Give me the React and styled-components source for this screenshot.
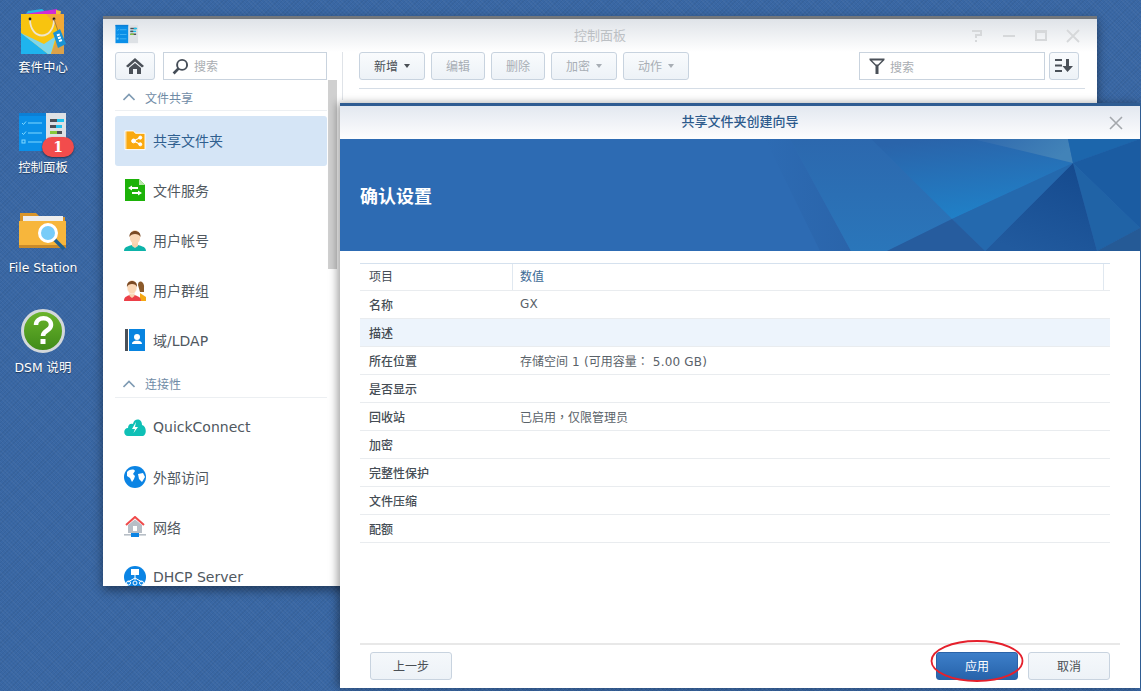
import React from "react";
import styled, { createGlobalStyle } from "styled-components";

const FONT = `"DejaVu Sans", "Noto Sans CJK SC", sans-serif`;

const Global = createGlobalStyle`
  html, body { margin: 0; padding: 0; height: 100%; overflow: hidden; }
  body { font-family: ${FONT}; }
  * { box-sizing: border-box; }
`;

const Desktop = styled.div`
  position: relative;
  width: 1141px;
  height: 691px;
  overflow: hidden;
  background-color: #3967a4;
  background-image: repeating-linear-gradient(45deg, rgba(255,255,255,.035) 0 1px, transparent 1px 3px),
    repeating-linear-gradient(-45deg, rgba(0,0,0,.05) 0 1px, transparent 1px 3px);
`;

const IconColumn = styled.div`
  display: flex;
  flex-direction: column;
  width: 86px;
  padding-top: 9px;
`;

const DesktopIcon = styled.div`
  display: flex;
  flex-direction: column;
  align-items: center;
  height: 100px;
  position: relative;
`;

const IconArt = styled.div`
  width: 50px;
  height: 50px;
  position: relative;
`;

const IconLabel = styled.div`
  margin-top: 2px;
  font-size: 12.4px;
  line-height: 14px;
  color: #fff;
  text-shadow: 0 1px 1px rgba(0, 0, 0, .45);
  white-space: nowrap;
`;

const Badge = styled.div`
  position: absolute;
  left: 24px;
  top: 28px;
  width: 32px;
  height: 20px;
  border-radius: 10px;
  background: #f24c4c;
  box-shadow: 0 1px 2px rgba(0, 0, 0, .5);
  color: #fff;
  font: bold 14px/20px "DejaVu Serif", serif;
  text-align: center;
`;

const Window = styled.div`
  position: absolute;
  left: 103px;
  top: 16px;
  width: 994px;
  height: 570px;
  background: #fff;
  border-top: 3px solid #73777c;
  box-shadow: 0 4px 10px rgba(0, 0, 0, .45);
  overflow: hidden;
`;

const WindowHeader = styled.div`
  height: 33px;
  position: relative;
  display: flex;
  align-items: center;
  justify-content: center;
  background: linear-gradient(#dfe3e8, #ffffff);
`;

const WindowTitle = styled.div`
  font-size: 13px;
  color: #bcc0c4;
  padding-bottom: 2px;
`;

const HeaderAppIcon = styled.div`
  position: absolute;
  left: 12px;
  top: 4px;
  width: 24px;
  height: 24px;
`;

const WindowControls = styled.div`
  position: absolute;
  right: 16px;
  top: 10px;
  display: flex;
  gap: 16px;
`;

const WindowBody = styled.div`
  display: flex;
  height: 534px;
`;

const Sidebar = styled.div`
  width: 239px;
  flex: none;
  position: relative;
  padding-left: 12px;
`;

const SidebarTop = styled.div`
  display: flex;
  gap: 8px;
  height: 28px;
`;

const IconButton = styled.div`
  width: ${p => p.$w || 40}px;
  height: 28px;
  flex: none;
  margin-right: ${p => p.$mr || 0}px;
  display: flex;
  align-items: center;
  justify-content: center;
  border: 1px solid #c8d3df;
  border-radius: 3px;
  background: linear-gradient(#f9fbfd, #edf2f7);
`;

const SearchBox = styled.div`
  width: ${p => p.$w}px;
  height: 28px;
  flex: none;
  margin-right: ${p => p.$mr || 0}px;
  display: flex;
  align-items: center;
  gap: ${p => p.$gap || 5}px;
  padding-left: ${p => p.$pad}px;
  border: 1px solid #c9d3de;
  background: #fff;
  font-size: 12px;
  color: #a9adb2;
`;

const SearchHint = styled.span`
  padding-bottom: ${p => p.$pb || 0}px;
`;

const Section = styled.div`
  width: 212px;
  height: ${p => p.$h || 31}px;
  display: flex;
  align-items: center;
  gap: 10px;
  padding: 4px 0 0 8px;
  border-bottom: 1px solid #eceff2;
  font-size: 12px;
  color: #6f8ba6;
`;

const NavRow = styled.div`
  width: 212px;
  height: 50px;
  margin-top: ${p => p.$mt || 0}px;
  display: flex;
  align-items: center;
  gap: 7px;
  padding: 0 0 3px 9px;
  border-radius: 3px;
  background: ${p => (p.$active ? "#d5e5f6" : "transparent")};
  color: ${p => (p.$active ? "#2f5f8f" : "#50585f")};
  font-size: 14px;
  white-space: nowrap;
`;

const NavIcon = styled.div`
  width: 22px;
  height: 22px;
  flex: none;
  display: flex;
  align-items: center;
  justify-content: center;
`;

const Scrollbar = styled.div`
  position: absolute;
  left: 225px;
  top: 28px;
  width: 9px;
  height: 189px;
  background: #d0d0d0;
`;

const Main = styled.div`
  flex: 1;
  padding: 0 12px 0 17px;
  position: relative;
  &::before {
    content: "";
    position: absolute;
    left: 0;
    top: 0;
    height: 48px;
    width: 1px;
    background: #dfe3e8;
  }
`;

const Toolbar = styled.div`
  display: flex;
  height: 37px;
  border-bottom: 1px solid #d5dde6;
  gap: 6px;
  width: 726px;
`;

const ToolButton = styled.div`
  width: ${p => p.$w}px;
  height: 28px;
  display: flex;
  align-items: center;
  justify-content: center;
  gap: 6px;
  border: 1px solid #c8d3df;
  border-radius: 3px;
  padding-bottom: 2px;
  background: linear-gradient(#f9fbfd, #edf2f7);
  font-size: 12px;
  color: ${p => (p.$disabled ? "#a8aeb5" : "#4a4f55")};
`;

const Caret = styled.span`
  width: 0;
  height: 0;
  margin-top: 2px;
  border: 3.5px solid transparent;
  border-top: 4px solid ${p => (p.$disabled ? "#a8aeb5" : "#4a4f55")};
  border-bottom: 0;
`;

const Spacer = styled.div`
  flex: 1;
`;

const Wizard = styled.div`
  position: absolute;
  left: 340px;
  top: 103px;
  width: 801px;
  height: 585px;
  background: #fff;
  border-top: 3px solid #2f5c92;
  border-right: 1px solid #2f5c92;
  box-shadow: -3px 0 8px rgba(0, 0, 0, .35);
  display: flex;
  flex-direction: column;
`;

const WizardHeader = styled.div`
  height: 33px;
  flex: none;
  position: relative;
  display: flex;
  align-items: center;
  justify-content: center;
  padding-bottom: 4px;
  background: linear-gradient(#e3e8f0, #fdfdfe);
  font-size: 13px;
  font-weight: 500;
  color: #2c5a8c;
`;

const CloseIcon = styled.div`
  position: absolute;
  right: 17px;
  top: 10px;
  width: 14px;
  height: 14px;
`;

const Banner = styled.div`
  height: 112px;
  flex: none;
  position: relative;
  background: #2d6bb3;
  display: flex;
  align-items: center;
  padding: 0 0 1px 20px;
  font-size: 18px;
  font-weight: bold;
  color: #fff;
  overflow: hidden;
`;

const BannerArt = styled.svg`
  position: absolute;
  left: 0;
  top: 0;
`;

const BannerTitle = styled.div`
  position: relative;
`;

const TableWrap = styled.div`
  flex: 1;
  padding: 12px 30px 0 20px;
`;

const Row = styled.div`
  display: grid;
  grid-template-columns: 152px 1fr ${p => (p.$head ? "7px" : "")};
  height: 28px;
  align-items: center;
  border-bottom: 1px solid #e9ecef;
  background: ${p => (p.$hl ? "#edf4fc" : "transparent")};
  font-size: 12px;
`;

const HeadRow = styled(Row)`
  border-top: 1px solid #d5e1ee;
  color: #3c6a95;
`;

const Cell = styled.div`
  height: 100%;
  display: flex;
  align-items: center;
  padding: 0 0 ${p => p.$pb ?? 1}px ${p => p.$pl || 9}px;
  white-space: pre;
  border-left: ${p => (p.$divider ? "1px solid #e0e8f0" : "0")};
`;

const KeyCell = styled(Cell)`
  color: #454d55;
  font-weight: ${p => (p.$head ? 400 : 500)};
`;

const ValueCell = styled(Cell)`
  color: #5a6269;
`;

const ValueText = styled.span`
  display: block;
`;

const Latin = styled.span`
  letter-spacing: .2px;
`;

const Punct = styled.span`
  font-family: "Noto Sans CJK TC", sans-serif;
`;

const Footer = styled.div`
  height: 45px;
  flex: none;
  margin: 0 20px;
  padding: 7px 10px 0;
  border-top: 2px solid #e8e8e8;
  display: flex;
  gap: 10px;
  background: #fff;
`;

const FooterButton = styled.div`
  width: 82px;
  height: 28px;
  display: flex;
  align-items: center;
  justify-content: center;
  padding-bottom: 2px;
  border-radius: 3px;
  font-size: 12px;
  border: 1px solid ${p => (p.$primary ? "#2a63a8" : "#c8d3df")};
  background: ${p => (p.$primary ? "linear-gradient(#3d7fc9, #2763ab)" : "linear-gradient(#f5f8fb, #edf2f7)")};
  color: ${p => (p.$primary ? "#fff" : "#4a4f55")};
`;

const Annotation = styled.svg`
  position: absolute;
  left: 928px;
  top: 638px;
  pointer-events: none;
`;

const Shop = () => (
  <svg width="50" height="50" viewBox="0 0 50 50">
    <path d="M10 2 L24 0 L30 5 H8z" fill="#25b9e4" />
    <path d="M7 5 L39 0 L40 5z" fill="#d02cd6" />
    <path d="M38 1 L43 2 L42 8 L38 8z" fill="#f4c23a" />
    <path d="M3 5 H46 V45 H3z" fill="#f8c40f" />
    <path d="M28 5 H46 V45 H34 L42 22z" fill="#f2a936" />
    <path d="M3 24 L30 45 H3z" fill="#1fb4ee" />
    <path d="M3 24 L26 35 L38 27 L33 45 H30z" fill="#7ed6ec" />
    <path d="M33 45 L41 24 L46 24 V45z" fill="#dca24a" />
    <path d="M12 10 C12 32 36 32 36 10" fill="none" stroke="#efe6cf" strokeWidth="1.8" />
    <circle cx="12" cy="10" r="1.4" fill="#222" /><circle cx="36" cy="10" r="1.4" fill="#222" />
    <path d="M36 10 L40 22" stroke="#a9803a" strokeWidth="1" />
    <path d="M35 24 L42 20 L48 35 L40 39z" fill="#1a93d4" />
    <path d="M40 25 l3 8" stroke="#fff" strokeWidth="3" strokeDasharray="2 1" />
  </svg>
);

const Panel = ({ size = 50 }) => (
  <svg width={size} height={size} viewBox="0 -4 50 50">
    <rect x="1" y="0" width="27" height="38" fill="#0a8fe8" />
    <rect x="1" y="0" width="27" height="3" fill="#0b7fd6" />
    <rect x="28" y="0" width="20" height="38" fill="#dde1e5" />
    <g stroke="#7fd8ff" strokeWidth="1">
      <path d="M10 10h14M10 20h14M10 29h14" />
      <path d="M4 10l1.5 1.5 2.5-3M4 20l1.5 1.5 2.5-3" fill="none" />
      <rect x="4" y="27" width="3" height="3" fill="none" />
    </g>
    <rect x="32" y="6" width="12" height="3" fill="#4a5058" /><rect x="39" y="6" width="7" height="3" fill="#1cc3ef" />
    <rect x="32" y="12" width="12" height="3" fill="#1cc3ef" /><rect x="32" y="12" width="6" height="3" fill="#4a5058" />
    <rect x="32" y="18" width="12" height="3" fill="#4a5058" /><rect x="32" y="18" width="7" height="3" fill="#86c83c" />
  </svg>
);

const Folder = () => (
  <svg width="50" height="50" viewBox="0 0 50 50">
    <path d="M2 4 H18 L22 8 H47 V36 H2z" fill="#d8952a" />
    <rect x="5" y="7" width="40" height="8" fill="#eeeeee" />
    <path d="M1 12 H48 V39 H1z" fill="#f7b63c" />
    <path d="M1 36 H48 V39 H1z" fill="#c98b2b" />
    <path d="M36 30 L46 40" stroke="#1f5f8f" strokeWidth="3.5" />
    <circle cx="30" cy="24" r="8.5" fill="#78ccf8" stroke="#fff" strokeWidth="3" />
  </svg>
);

const Help = () => (
  <svg width="50" height="50" viewBox="0 0 50 50">
    <defs><linearGradient id="hg" x1="0" y1="0" x2="0" y2="1"><stop offset="0" stopColor="#6bb52c" /><stop offset="1" stopColor="#3f8a18" /></linearGradient></defs>
    <circle cx="25" cy="22" r="20.5" fill="url(#hg)" stroke="#d3d8db" strokeWidth="3" />
    <path d="M18 16 C18 7 33 7 33 16 C33 22 25 21 25 27" fill="none" stroke="#fff" strokeWidth="4.5" />
    <rect x="22.5" y="30" width="5" height="5" fill="#fff" />
  </svg>
);

const Chevron = () => (
  <svg width="12" height="8" viewBox="0 0 12 8"><path d="M0.5 7 L6 1.5 L11.5 7" fill="none" stroke="#7f9bb3" strokeWidth="1.6" /></svg>
);

const Magnifier = () => (
  <svg width="17" height="17" viewBox="0 0 16 16"><circle cx="9.5" cy="6.5" r="4.7" fill="none" stroke="#454d57" strokeWidth="1.8" /><path d="M6 10 L1.5 14.5" stroke="#454d57" strokeWidth="2.6" /></svg>
);

const FolderNav = () => (
  <svg width="23" height="22" viewBox="0 0 23 22">
    <path d="M1 1.5 H10 L12 4 H22 V21 H1z" fill="#faa90f" stroke="#fff" strokeWidth="1" />
    <path d="M1 1.5 H3 V21 H1z" fill="#fff" opacity=".35" />
    <g fill="#fff" stroke="#fff"><circle cx="10" cy="12" r="2" /><circle cx="17" cy="8.5" r="1.6" /><circle cx="17" cy="15.5" r="1.6" /><path d="M10 12 L17 8.5 M10 12 L17 15.5" strokeWidth="1.2" /></g>
  </svg>
);

const FileService = () => (
  <svg width="20" height="22" viewBox="0 0 20 22">
    <path d="M0 0 H14 L20 6 V22 H0z" fill="#1cb208" />
    <path d="M14 0 V6 H20z" fill="#b8e8a8" />
    <path d="M3 9 L7 6.5 V8 H13 V10 H7 V11.5z M17 14 L13 11.5 V13 H7 V15 H13 V16.5z" fill="#fff" />
  </svg>
);

const User = () => (
  <svg width="22" height="22" viewBox="0 0 22 22">
    <path d="M0 22 C0 17 6 17 11 15 C16 17 22 17 22 22z" fill="#0db3a9" />
    <path d="M8 13 H14 V17 L11 19 L8 17z" fill="#f8d2ad" />
    <ellipse cx="11" cy="8" rx="5.2" ry="7" fill="#fbd7b5" />
    <path d="M5.5 8 C4.5 0 17.5 0 16.5 8 C15 4 7 4 5.5 8z" fill="#7b4a24" />
  </svg>
);

const Group = () => (
  <svg width="22" height="22" viewBox="0 0 22 22">
    <path d="M14 6 C14 0 21 2 20 9 L20 13 L16 13z" fill="#8b5a2b" />
    <path d="M16 14 L22 18 V22 H16z" fill="#f5a914" />
    <path d="M0 22 C0 17 4 17 8 15 C12 17 17 17 17 22z" fill="#ec3f47" />
    <path d="M5.5 13 H10.5 V17 L8 19 L5.5 17z" fill="#f8d2ad" />
    <ellipse cx="8" cy="8" rx="5" ry="7" fill="#fbd7b5" stroke="#fff" strokeWidth=".5" />
    <path d="M3 8 C2 0 14 0 13 8 C12 4 4 4 3 8z" fill="#7b4a24" />
  </svg>
);

const Ldap = () => (
  <svg width="20" height="22" viewBox="0 0 20 22">
    <rect x="0" y="0" width="3" height="22" fill="#4a5058" />
    <rect x="4" y="0" width="16" height="22" fill="#0884e0" />
    <circle cx="12" cy="8" r="3" fill="#fff" />
    <path d="M7 15 C7 12 10 12 12 11.5 C14 12 17 12 17 15z" fill="#fff" />
  </svg>
);

const Cloud = () => (
  <svg width="22" height="18" viewBox="0 0 22 18">
    <path d="M4 18 C-1 18 -1 10 4 10 C4 6 7 5 9 6 C10 0 18 0 18 7 C23 8 23 18 18 18z" fill="#0fc0b6" />
    <path d="M12 4 L8 11 H11 L9.5 15 L14 9 H11z" fill="#fff" />
  </svg>
);

const Globe = () => (
  <svg width="22" height="22" viewBox="0 0 22 22">
    <circle cx="11" cy="11" r="11" fill="#0b84e4" />
    <path d="M3 6 C6 3 10 3 11 5 L9 8 L11 10 L10 13 L8 16 L6 12 L3 10z M14 8 L19 7 L21 11 L18 16 L15 13z" fill="#fff" />
  </svg>
);

const House = () => (
  <svg width="22" height="22" viewBox="0 0 22 22">
    <path d="M2 9 L11 1 L20 9" fill="none" stroke="#f04a4a" strokeWidth="2" />
    <path d="M4 9 L11 3.5 L18 9 V17 H4z" fill="#b7bec6" />
    <rect x="9" y="10" width="4" height="5" fill="#fff" />
    <rect x="0" y="18" width="22" height="1.6" fill="#b7bec6" />
    <rect x="7" y="17" width="8" height="4" fill="#0b84e4" />
  </svg>
);

const Dhcp = () => (
  <svg width="22" height="22" viewBox="0 0 22 22">
    <circle cx="11" cy="11" r="11" fill="#0b84e4" />
    <path d="M7 3 H15 V9 H7z" fill="#fff" />
    <path d="M11 8 V14 M4 16 L11 12 L18 16" stroke="#fff" fill="none" />
    <g fill="none" stroke="#fff"><circle cx="4.5" cy="17" r="2" /><circle cx="11" cy="17" r="2" /><circle cx="17.5" cy="17" r="2" /></g>
  </svg>
);

const Controls = () => (
  <>
    <svg width="16" height="14" viewBox="0 0 16 14"><path d="M3 2 H12 V6 H7 V9 M7 11 V13" fill="none" stroke="#d6d8da" strokeWidth="2" /></svg>
    <svg width="16" height="14" viewBox="0 0 16 14"><path d="M2 7 H14" stroke="#d6d8da" strokeWidth="2" /></svg>
    <svg width="16" height="14" viewBox="0 0 16 14"><rect x="3" y="2" width="10" height="9" fill="none" stroke="#d6d8da" strokeWidth="2" /><path d="M3 3 H13" stroke="#d6d8da" strokeWidth="2" /></svg>
    <svg width="16" height="14" viewBox="0 0 16 14"><path d="M2 1 L14 13 M14 1 L2 13" stroke="#d6d8da" strokeWidth="1.8" /></svg>
  </>
);

const nav1 = [
  ["共享文件夹", <FolderNav />, true],
  ["文件服务", <FileService />],
  ["用户帐号", <User />],
  ["用户群组", <Group />],
  ["域/LDAP", <Ldap />],
];
const nav2 = [
  ["QuickConnect", <Cloud />],
  ["外部访问", <Globe />],
  ["网络", <House />],
  ["DHCP Server", <Dhcp />],
];

const rows = [
  ["名称", <Latin>GX</Latin>],
  ["描述", "", true],
  ["所在位置", <>存储空间<Latin> 1 (</Latin>可用容量<Punct>：</Punct><Latin> 5.00 GB)</Latin></>],
  ["是否显示", ""],
  ["回收站", <>已启用<Punct>，</Punct>仅限管理员</>],
  ["加密", ""],
  ["完整性保护", ""],
  ["文件压缩", ""],
  ["配额", ""],
];

export default function App() {
  return (
    <Desktop>
      <Global />
      <IconColumn>
        <DesktopIcon><IconArt><Shop /></IconArt><IconLabel>套件中心</IconLabel></DesktopIcon>
        <DesktopIcon><IconArt><Panel /><Badge>1</Badge></IconArt><IconLabel>控制面板</IconLabel></DesktopIcon>
        <DesktopIcon><IconArt><Folder /></IconArt><IconLabel>File Station</IconLabel></DesktopIcon>
        <DesktopIcon><IconArt><Help /></IconArt><IconLabel>DSM 说明</IconLabel></DesktopIcon>
      </IconColumn>

      <Window>
        <WindowHeader>
          <HeaderAppIcon><Panel size={24} /></HeaderAppIcon>
          <WindowTitle>控制面板</WindowTitle>
          <WindowControls><Controls /></WindowControls>
        </WindowHeader>
        <WindowBody>
          <Sidebar>
            <SidebarTop>
              <IconButton>
                <svg width="18" height="16" viewBox="0 0 18 16"><path d="M0 8 L9 0 L18 8 L16 9.5 L9 3.5 L2 9.5z M3 10 L9 5 L15 10 V16 H11 V11 H7 V16 H3z" fill="#4a5058" /></svg>
              </IconButton>
              <SearchBox $w={164} $pad={8}><Magnifier /><SearchHint $pb={2}>搜索</SearchHint></SearchBox>
            </SidebarTop>
            <Section><Chevron />文件共享</Section>
            {nav1.map(([t, icon, active], i) => (
              <NavRow key={t} $active={active} $mt={i === 0 ? 5 : 0}><NavIcon>{icon}</NavIcon>{t}</NavRow>
            ))}
            <Section $h={32}><Chevron />连接性</Section>
            {nav2.map(([t, icon], i) => (
              <NavRow key={t} $mt={i === 0 ? 5 : 0}><NavIcon>{icon}</NavIcon>{t}</NavRow>
            ))}
            <Scrollbar />
          </Sidebar>
          <Main>
            <Toolbar>
              <ToolButton $w={66}>新增<Caret /></ToolButton>
              <ToolButton $w={54} $disabled>编辑</ToolButton>
              <ToolButton $w={54} $disabled>删除</ToolButton>
              <ToolButton $w={66} $disabled>加密<Caret $disabled /></ToolButton>
              <ToolButton $w={66} $disabled>动作<Caret $disabled /></ToolButton>
              <Spacer />
              <SearchBox $w={186} $pad={9} $mr={-2}>
                <svg width="16" height="16" viewBox="0 0 16 16"><path d="M0.5 0.5 H15.5 V2 L9.5 8 V16 H6.5 V8 L0.5 2z M3 2.5 L7 6.5 H9 L13 2.5z" fill="#4a5058" fillRule="evenodd" /></svg>
                <SearchHint>搜索</SearchHint>
              </SearchBox>
              <IconButton $w={30} $mr={6}>
                <svg width="18" height="14" viewBox="0 0 18 14"><path d="M0 1 H7 M0 6.5 H7 M0 12 H7" stroke="#4a5058" strokeWidth="2" /><path d="M11 0 H14 V7 H18 L12.5 13 L7.5 7 H11z" fill="#4a5058" /></svg>
              </IconButton>
            </Toolbar>
          </Main>
        </WindowBody>
      </Window>

      <Wizard>
        <WizardHeader>
          共享文件夹创建向导
          <CloseIcon>
            <svg width="14" height="14" viewBox="0 0 14 14"><path d="M1 1 L13 13 M13 1 L1 13" stroke="#a4a8ac" strokeWidth="1.6" /></svg>
          </CloseIcon>
        </WizardHeader>
        <Banner>
          <BannerArt width="800" height="112" viewBox="0 0 800 112">
            <defs>
              <linearGradient id="bShade" x1="0" y1="0" x2="1" y2="0"><stop offset="0" stopColor="#2d6bb3" /><stop offset="1" stopColor="#2a64aa" /></linearGradient>
              <linearGradient id="bLeft" x1="0" y1="0" x2="0" y2="1"><stop offset="0" stopColor="#2c68ae" /><stop offset="1" stopColor="#2a76ba" /></linearGradient>
              <linearGradient id="bBright" x1="0.3" y1="0" x2="0.6" y2="1"><stop offset="0" stopColor="#2a64aa" /><stop offset="1" stopColor="#1f82c9" /></linearGradient>
              <linearGradient id="bTop" x1="0" y1="0" x2="1" y2="0.3"><stop offset="0" stopColor="#3069ad" /><stop offset="1" stopColor="#4283b8" /></linearGradient>
              <linearGradient id="bDark" x1="0.8" y1="0" x2="0.3" y2="1"><stop offset="0" stopColor="#154a8e" /><stop offset="1" stopColor="#215a9e" /></linearGradient>
            </defs>
            <polygon points="425,0 450,0 511,112 480,112" fill="url(#bShade)" />
            <polygon points="450,0 531,0 612,80 547,112 511,112" fill="url(#bLeft)" />
            <polygon points="531,0 633,0 733,24 612,80" fill="url(#bBright)" />
            <polygon points="633,0 728,0 733,24" fill="url(#bTop)" />
            <polygon points="728,0 800,0 733,24" fill="#1c66ac" />
            <polygon points="733,24 800,0 800,89" fill="#1b5ca2" />
            <polygon points="733,24 800,89 757,112" fill="#2063a6" />
            <polygon points="800,89 757,112 800,112" fill="#255a96" />
            <polygon points="733,24 757,112 645,112" fill="url(#bDark)" />
            <polygon points="733,24 645,112 612,80" fill="#2469ae" />
            <polygon points="612,80 645,112 547,112" fill="#265c9e" />
          </BannerArt>
          <BannerTitle>确认设置</BannerTitle>
        </Banner>
        <TableWrap>
          <HeadRow $head>
            <KeyCell $head $pb={3}>项目</KeyCell>
            <Cell $divider $pl={7} $pb={3}>数值</Cell>
            <Cell $divider />
          </HeadRow>
          {rows.map(([k, v, hl]) => (
            <Row key={k} $hl={hl}>
              <KeyCell>{k}</KeyCell>
              <ValueCell $pl={8}><ValueText>{v}</ValueText></ValueCell>
            </Row>
          ))}
        </TableWrap>
        <Footer>
          <FooterButton>上一步</FooterButton>
          <Spacer />
          <FooterButton $primary>应用</FooterButton>
          <FooterButton>取消</FooterButton>
        </Footer>
      </Wizard>

      <Annotation width="98" height="47" viewBox="0 0 98 47">
        <ellipse cx="49" cy="23" rx="45.5" ry="20" fill="none" stroke="#e5202c" strokeWidth="1.8" />
      </Annotation>
    </Desktop>
  );
}
